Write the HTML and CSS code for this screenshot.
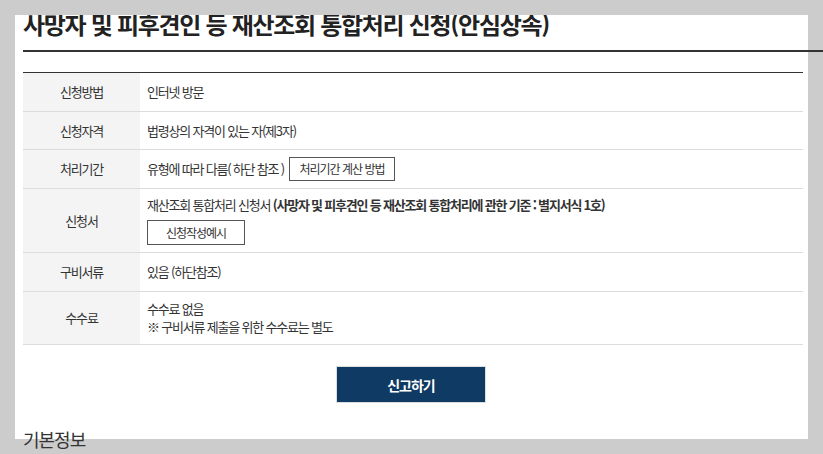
FILE: index.html
```html
<!DOCTYPE html>
<html lang="ko">
<head>
<meta charset="utf-8">
<title>사망자 및 피후견인 등 재산조회 통합처리 신청(안심상속)</title>
<link rel="stylesheet" href="styles.css">
</head>
<body>
<div class="topbar"></div>
<div class="page">
  <div class="panel">
    <h1 class="title">사망자 및 피후견인 등 재산조회 통합처리 신청(안심상속)</h1>
    <table class="info">
      <tbody>
        <tr>
          <th>신청방법</th>
          <td>인터넷 방문</td>
        </tr>
        <tr class="tight">
          <th>신청자격</th>
          <td>법령상의 자격이 있는 자(제3자)</td>
        </tr>
        <tr>
          <th>처리기간</th>
          <td class="with-btn">
            <div class="row-inline">
              <span>유형에 따라 다름( 하단 참조 )</span>
              <button class="btn-line">처리기간 계산 방법</button>
            </div>
          </td>
        </tr>
        <tr>
          <th>신청서</th>
          <td class="multi">
            <div>재산조회 통합처리 신청서 <b>(사망자 및 피후견인 등 재산조회 통합처리에 관한 기준 : 별지서식 1호)</b></div>
            <button class="btn-line btn-example">신청작성예시</button>
          </td>
        </tr>
        <tr>
          <th>구비서류</th>
          <td>있음 (하단참조)</td>
        </tr>
        <tr>
          <th>수수료</th>
          <td class="two">수수료 없음<br>※ 구비서류 제출을 위한 수수료는 별도</td>
        </tr>
      </tbody>
    </table>
    <div class="actions">
      <button class="btn-submit">신고하기</button>
    </div>
    <h2 class="section">기본정보</h2>
  </div>
</div>
</body>
</html>
```
FILE: styles.css
```css
html, body {
  margin: 0;
  padding: 0;
}
body {
  background: #cccccc;
  font-family: "Noto Sans CJK KR", "Noto Sans", sans-serif;
  color: #333;
}
.page {
  min-height: 454px;
  padding-top: 15px;
  box-sizing: border-box;
}
.topbar {
  position: fixed;
  top: 0;
  left: 0;
  right: 0;
  height: 15px;
  background: #cccccc;
  z-index: 10;
}
.panel {
  display: flow-root;
  margin-left: 15px;
  width: 793px;
  height: 424px;
  box-sizing: border-box;
  padding-left: 8px;
  background: #fff;
}
.title {
  margin: -6px 0 0 0;
  width: 800px;
  padding: 0 0 11px 0;
  font-size: 24px;
  line-height: 30px;
  font-weight: 700;
  letter-spacing: -1.3px;
  color: #222;
  border-bottom: 2px solid #333;
  white-space: nowrap;
}
.info {
  margin-top: 20px;
  width: 780px;
  border-collapse: collapse;
  border-top: 1px solid #333;
  border-bottom: 1px solid #333;
  font-size: 13px;
  letter-spacing: -1.2px;
}
.info th,
.info td {
  border-bottom: 1px solid #dcdcdc;
  padding: 9px 7px;
  line-height: 20px;
  text-align: left;
  font-weight: 400;
}
.info th {
  width: 103px;
  background: #f4f4f4;
  text-align: center;
  color: #333;
}
.info td {
  color: #333;
}
.info tr.tight th,
.info tr.tight td {
  padding-bottom: 8px;
}
.info td.with-btn {
  padding: 7px 7px;
}
.row-inline {
  display: flex;
  align-items: center;
  gap: 5px;
  height: 24px;
}
.info td.multi {
  padding: 6px 7px 7px;
}
.info td.two {
  padding: 8px 7px;
  line-height: 18px;
}
.info b {
  font-weight: 700;
}
.btn-line {
  font-family: inherit;
  font-size: 12px;
  letter-spacing: -1px;
  color: #333;
  background: #fff;
  border: 1px solid #555;
  padding: 0;
  height: 24px;
  width: 106px;
  line-height: 22px;
}
.btn-example {
  display: block;
  margin-top: 5px;
  width: 98px;
  height: 25px;
}
.actions {
  display: flex;
  justify-content: center;
  width: 776px;
  margin-top: 21px;
}
.btn-submit {
  width: 150px;
  height: 37px;
  background: #0e3a63;
  color: #fff;
  border: 1px solid #dddddd;
  font-family: inherit;
  font-size: 14px;
  font-weight: 700;
  letter-spacing: -1px;
}
.section {
  margin: 24px 0 0 0;
  font-size: 18px;
  line-height: 24px;
  font-weight: 400;
  letter-spacing: -1px;
  color: #333;
}
```
